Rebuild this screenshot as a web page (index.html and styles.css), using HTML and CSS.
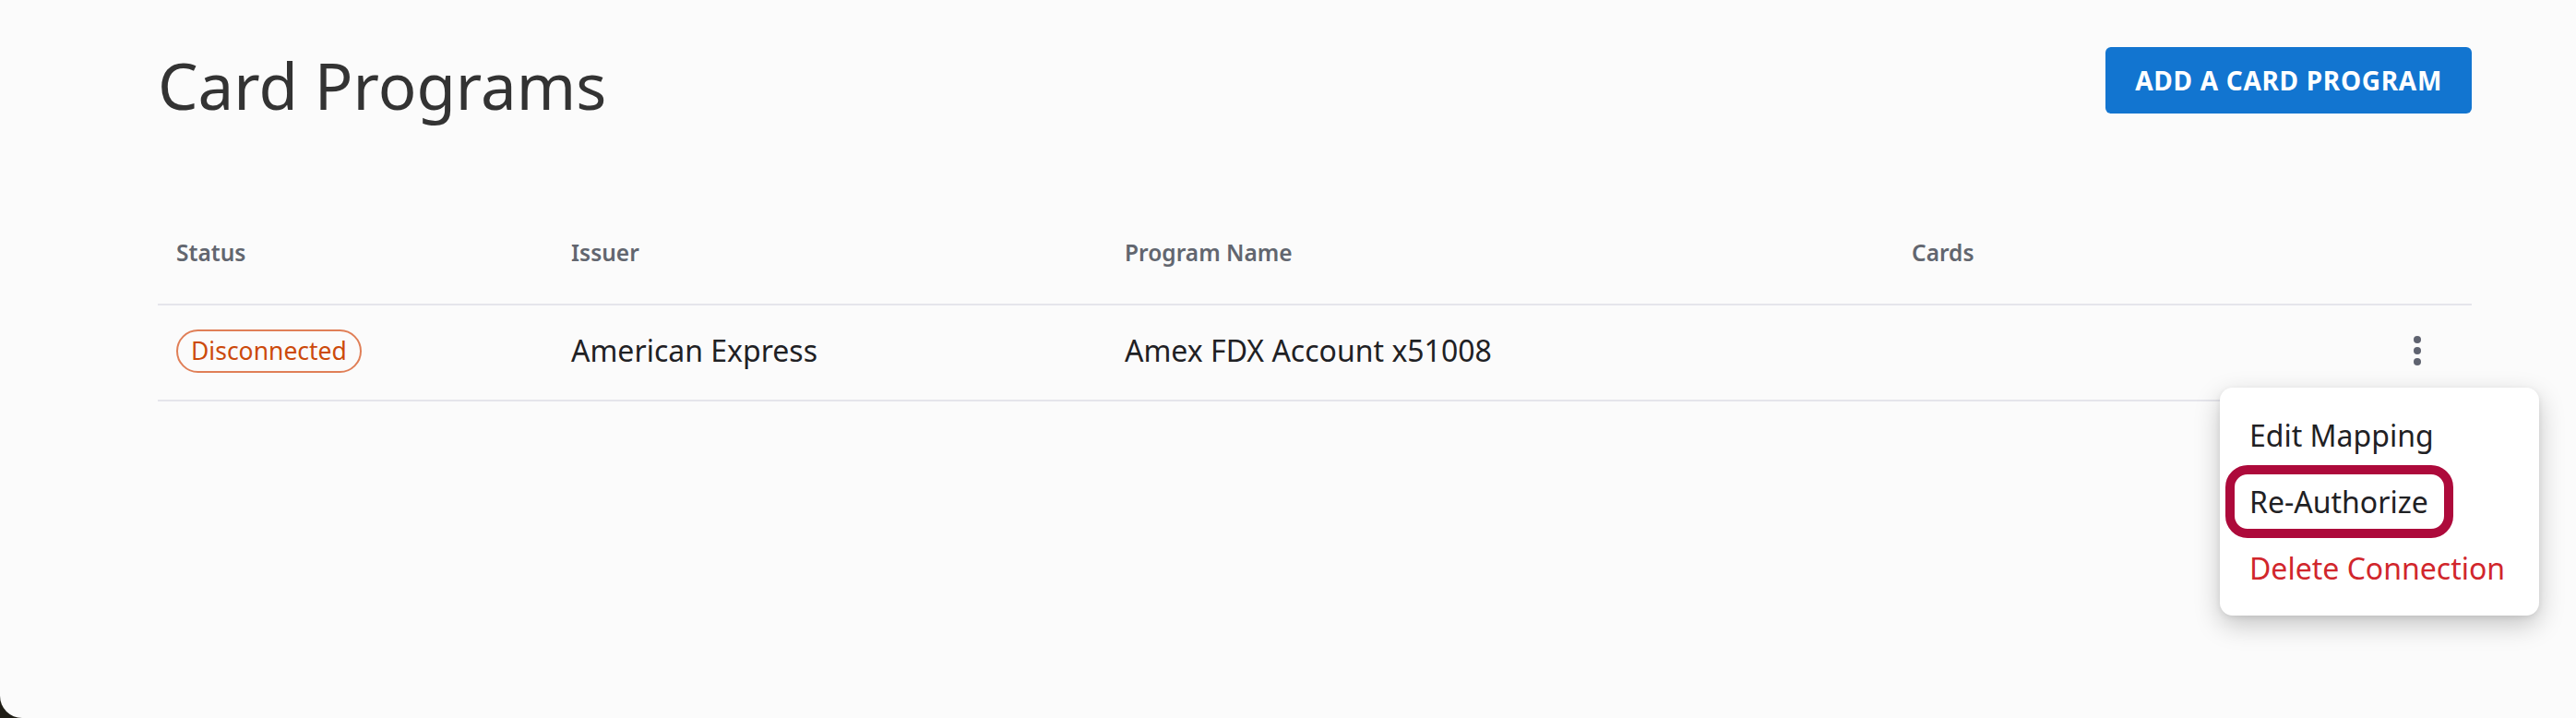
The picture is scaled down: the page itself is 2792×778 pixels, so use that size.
FILE: index.html
```html
<!DOCTYPE html>
<html lang="en">
<head>
<meta charset="utf-8">
<title>Card Programs</title>
<link rel="stylesheet" href="styles.css">
</head>
<body>
<div class="page">
  <header class="page-header">
    <h1 class="title">Card Programs</h1>
    <button class="btn-primary" type="button">ADD A CARD PROGRAM</button>
  </header>

  <div class="table">
    <div class="row head">
      <div class="cell">Status</div>
      <div class="cell">Issuer</div>
      <div class="cell">Program Name</div>
      <div class="cell">Cards</div>
      <div class="cell"></div>
    </div>
    <div class="row body">
      <div class="cell"><span class="badge">Disconnected</span></div>
      <div class="cell">American Express</div>
      <div class="cell">Amex FDX Account x51008</div>
      <div class="cell"></div>
      <div class="cell actions">
        <svg class="kebab" viewBox="0 0 24 24" width="48" height="48" aria-hidden="true">
          <circle cx="12" cy="6" r="2"/>
          <circle cx="12" cy="12" r="2"/>
          <circle cx="12" cy="18" r="2"/>
        </svg>
      </div>
    </div>
  </div>

  <div class="menu">
    <div class="menu-item">Edit Mapping</div>
    <div class="menu-item">Re-Authorize</div>
    <div class="menu-item danger">Delete Connection</div>
    <div class="highlight"></div>
  </div>
</div>
</body>
</html>
```
FILE: styles.css
```css
html, body {
  margin: 0;
  padding: 0;
  width: 2792px;
  height: 778px;
  overflow: hidden;
  background: #1f1d15;
}

.page {
  position: relative;
  box-sizing: border-box;
  width: 2792px;
  height: 778px;
  background: #fbfbfb;
  border-bottom-left-radius: 24px;
  padding: 50px 113px 0 171px;
  font-family: "Noto Sans", "Open Sans", sans-serif;
  color: #1f2124;
}

.page-header {
  display: flex;
  justify-content: space-between;
  align-items: flex-start;
}

.title {
  margin: 0;
  font-size: 69px;
  line-height: 84px;
  font-weight: 400;
  color: #333333;
}

.btn-primary {
  margin-top: 1px;
  height: 72px;
  padding: 0 32px;
  border: 0;
  border-radius: 6px;
  background: #1275d0;
  color: #ffffff;
  font-family: "Noto Sans", "Open Sans", sans-serif;
  font-size: 28px;
  font-weight: 700;
  letter-spacing: 0.7px;
  line-height: 72px;
}

.table {
  margin-top: 84px;
}

.row {
  display: grid;
  grid-template-columns: 428px 600px 853px 1fr 120px;
  border-bottom: 2px solid #e5e5eb;
}

.row.head {
  height: 111px;
  align-items: center;
  font-size: 24.5px;
  font-weight: 600;
  color: #62666f;
}

.row.body {
  box-sizing: border-box;
  height: 104px;
  padding-bottom: 5px;
  align-items: center;
  font-size: 32px;
}

.cell {
  padding-left: 20px;
}

.badge {
  display: inline-block;
  box-sizing: border-box;
  height: 47px;
  padding: 0 14px;
  border: 2px solid #e07f57;
  border-radius: 24px;
  color: #cc4a0b;
  font-size: 26.5px;
  line-height: 43px;
}

.actions {
  display: flex;
  justify-content: flex-end;
  padding-right: 35px;
}

.kebab {
  display: block;
  fill: #5f6370;
}

.menu {
  position: absolute;
  left: 2406px;
  top: 420px;
  box-sizing: border-box;
  width: 346px;
  padding: 16px 0 15px;
  background: #ffffff;
  border-radius: 14px;
  box-shadow: 0 10px 28px rgba(0, 0, 0, 0.22), 0 2px 6px rgba(0, 0, 0, 0.08);
}

.menu-item {
  padding: 0 32px;
  font-size: 32px;
  line-height: 72px;
  color: #1f2124;
  white-space: nowrap;
}

.menu-item.danger {
  color: #d1262c;
}

.highlight {
  position: absolute;
  left: 6px;
  top: 84px;
  box-sizing: border-box;
  width: 247px;
  height: 79px;
  border: 10px solid #ad0a3b;
  border-radius: 24px;
}
```
